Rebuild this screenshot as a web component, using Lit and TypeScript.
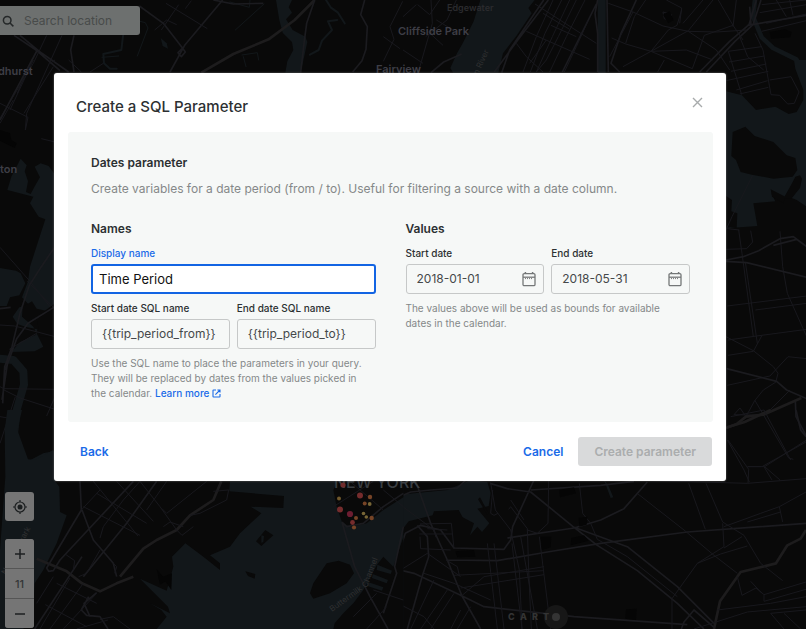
import { LitElement, html, svg, css } from "lit";
import { customElement, property } from "lit/decorators.js";

interface Trip {
  x: number;
  y: number;
  r: number;
  color: string;
}

const TRIPS: Trip[] = [
  { x: 343, y: 485, r: 2.6, color: "#702c2c" },
  { x: 339, y: 498.5, r: 2, color: "#71592c" },
  { x: 360, y: 495.5, r: 3, color: "#752c2d" },
  { x: 370, y: 497, r: 2.2, color: "#774426" },
  { x: 364.7, y: 503.5, r: 2, color: "#774426" },
  { x: 369.7, y: 504, r: 1.9, color: "#776536" },
  { x: 340, y: 509.5, r: 3, color: "#752c2d" },
  { x: 350, y: 514, r: 3.1, color: "#6c1d31" },
  { x: 363.5, y: 513.5, r: 1.8, color: "#776536" },
  { x: 366.3, y: 517, r: 1.8, color: "#776536" },
  { x: 356, y: 518, r: 2, color: "#774426" },
  { x: 371.7, y: 518, r: 2.2, color: "#774426" },
  { x: 352.5, y: 522.5, r: 2.4, color: "#752c2d" },
  { x: 354, y: 527.5, r: 2.1, color: "#774426" },
];

@customElement("city-map")
class CityMap extends LitElement {
  static styles = css`
    :host {
      display: block;
    }
    .canvas {
      display: block;
      width: 100%;
      height: 100%;
      background: #090909;
    }
    .water {
      fill: #12171a;
    }
    .stream {
      fill: none;
      stroke: #12171a;
      stroke-linecap: round;
      stroke-linejoin: round;
    }
    .s3 { stroke-width: 3; }
    .s6 { stroke-width: 6; }
    .s14 { stroke-width: 14; }
    .s24 { stroke-width: 24; }
    .land {
      fill: #090909;
    }
    .park {
      fill: #050505;
    }
    .street,
    .road,
    .highway {
      fill: none;
      stroke-linejoin: round;
    }
    .street {
      stroke: #18181d;
      stroke-width: 3;
    }
    .road {
      stroke: #1b1b1f;
      stroke-width: 5;
    }
    .highway {
      stroke: #1d1c1d;
      stroke-width: 8;
    }
    text {
      font-family: Inter, "Liberation Sans", sans-serif;
    }
    .town {
      font-size: 11px;
      font-weight: 600;
      fill: #3e3e46;
    }
    .minor {
      font-size: 9px;
      font-weight: 600;
      fill: #2b2b2e;
    }
    .city {
      font-size: 16px;
      font-weight: 500;
      fill: #3a3e42;
    }
    .river {
      font-size: 8px;
      fill: #2f3031;
    }
    .brand {
      font-size: 9px;
      font-weight: 800;
      fill: #343434;
    }
    .halo {
      fill: #171717;
    }
    .core {
      fill: #343434;
    }
  `;

  private northWest() {
    return svg`<g transform="scale(0.33333)">
      <path class="water" d="M828 0H876L866 22 876 38 858 58 878 90 916 110 922 126 902 218H856L862 184 880 150 876 126 848 98 838 60Z"/>
      <path class="water" d="M482 114L500 130 504 146 488 138Z"/>
      <path class="stream s6" d="M978 0L992 22 1014 38 1034 70M1012 60L984 64 996 90 966 122 956 150 930 164"/>
      <path class="stream s6" d="M370 100L364 150 310 162 312 190 330 206H350"/>
      <path class="stream s3" d="M412 168L444 84 436 68 412 62M306 172L356 168M750 0L748 22 690 6M726 165L772 158 776 180M730 170L738 200M792 12L706 90"/>
      <path class="road" d="M42 106L108 150 180 212M60 106L118 154 206 216M222 106L212 150 222 216"/>
      <path class="highway" d="M944 0L884 60 806 118 700 162 604 218"/>
      <path class="road" d="M944 0L920 70 912 130 902 218M668 0L554 136 510 216M418 18L490 70 540 134 556 156 544 170 534 158 552 140M640 0L700 12 790 10M1094 0L1082 44 1102 80 1098 148 1086 182 1058 216"/>
      <path class="street" d="M140 106L100 190 0 355M186 106L80 340 76 390M160 200L72 340M0 310L84 352 76 390M498 10L622 86M536 14L484 90M464 90L500 60 530 74M574 2L556 26M1208 4L1170 80 1182 118 1150 184M1150 110L1200 146M112 150L76 220 52 280M206 180L244 216M310 190L270 216"/>
      <path class="road" d="M112 150L34 296 0 360"/>
    </g>`;
  }

  private northEast() {
    return svg`<g transform="translate(403 0) scale(0.33333)">
      <path class="water" d="M232 0H395L376 24 386 40 340 108 300 160 286 218H150L142 204 162 160 180 128 212 64Z"/>
      <path class="stream s24" d="M596 0V218"/>
      <path class="stream s14" d="M1056 0L1050 50 1076 112 1110 144 1180 178 1212 236"/>
      <path class="road" d="M436 0L340 126 274 216M422 0L320 150 296 218M584 0L576 40 584 100V216M612 0L616 216M580 12L478 216M700 0L654 100 624 190 650 216M1060 0L1038 74 980 124 890 216M1074 0L1050 74 996 124 910 216M1040 20L1044 72M176 162L122 186 84 218"/>
      <path class="street" d="M0 50L40 14M84 0L88 70 46 216M0 150L60 190M70 90L120 136M44 14L80 44 110 0M160 0L132 60 68 110M100 60L150 90M396 12L580 130M370 94L560 178M340 130L370 170 420 216M450 0L400 110 360 216M476 0L426 100 382 216M500 0L448 110 400 216M520 0L466 110 430 180 400 216M546 0L490 110 440 216M556 60L520 140 484 216M420 40L500 88M444 76L520 110M430 120L380 190"/>
      <path class="street" d="M616 10L690 36 780 78 856 94 940 96 1030 90M728 0L694 50 668 130M626 114L668 132 744 154 868 206M690 36L620 170M744 154L856 92 930 0M660 200L744 154 850 150 930 180M780 36L806 44 802 62 784 56 780 36M836 30L822 76 796 90 744 154M790 0L836 24 830 70M900 0L840 70M868 206L904 106 990 76M856 94L940 150 980 210M946 0L990 76 1020 120M1000 0L990 80M784 180L764 216"/>
      <path class="street" d="M1160 0L1170 46M1076 14L1130 8 1210 0M1070 38L1210 14M1076 94L1210 62M1090 70L1210 42M1120 0L1150 50M1010 110L1034 170 1082 210M976 154L1076 140M978 186L1084 168M984 214L1090 192M970 242L1096 214M1000 270L1094 242M1010 282L1096 262M976 154L1016 284M1056 100L1080 150 1104 284 1130 286 1154 312 1174 310 1188 276 1164 230 1100 240"/>
      <path class="road" d="M1034 76L1210 46"/>
      <path class="park" d="M1100 96L1146 88 1166 96 1162 112 1104 116ZM780 44L800 34 812 60 796 70Z"/>
    </g>`;
  }

  private west() {
    return svg`<g transform="translate(0 60) scale(0.33333)">
      <path class="water" d="M62 296L80 316 74 334 84 364 78 396 92 402 106 376 120 352 104 320 122 310 146 318 165 344V730L110 770 84 786 100 800 130 860 104 874 34 876 60 846 108 824 112 808 76 800 52 792 38 770 58 742 88 736 66 712 84 664 90 620 136 478 116 470 90 430 100 410 22 390 34 350Z"/>
      <path class="water" d="M0 624L48 632 62 640 76 670 58 706 30 712 20 738 0 738Z"/>
      <path class="stream s24" d="M0 896L40 900 70 934 72 974 50 1050 38 1160 30 1280"/>
      <path class="water" d="M52 1142L84 1204 130 1180 165 1172V1290H20L26 1160Z"/>
      <path class="land" d="M68 740L96 724 110 746 138 752 110 770 84 786 66 770ZM165 744L110 776 120 830 165 830Z"/>
      <path class="road" d="M165 560L124 620 88 676 60 760 36 860 14 920 8 1030M165 740L84 790 50 836 16 930M0 746L32 742M24 900L6 1020"/>
      <path class="street" d="M0 562L90 664 150 740M82 664L165 746M0 795L44 798 165 830M0 980L12 986 165 988M12 990L60 1014 165 1048M46 1010L0 1150M28 868L110 820M165 1010L140 1068M124 236L165 246M0 1070L24 1074M0 190L40 120M100 0L30 150M150 10L165 0"/>
      <path class="park" d="M0 210L30 220 34 240 50 250 44 264 0 242Z"/>
    </g>`;
  }

  private east() {
    return svg`<g transform="translate(720 60) scale(0.33333)">
      <path class="water" d="M18 94L66 106 108 150 166 140 206 162 230 156 250 120 250 90 226 26 222 0H260V440L230 420 206 410 180 414 154 400 166 424 100 430 112 498 30 504 18 500Z"/>
      <path class="land" d="M38 216L76 200 104 228 160 246 200 286 226 294 232 330 218 350 160 356 96 344 62 336 48 300 34 288ZM240 346L246 356 240 384 214 416 190 416 216 370 226 350ZM152 388L196 410 190 430 156 410ZM18 408L36 420 34 454 52 460 50 504 18 500Z"/>
      <path class="street" d="M98 346L36 470 18 510M56 510L66 580 100 830M76 606L112 850M22 506L58 510M92 512L98 546 80 566 18 568M180 514L188 620 202 700 260 830M22 738L260 708M106 750L260 730M24 840L110 828 260 808M24 886L100 874 126 826M18 830L100 872 160 920 174 940 168 964M22 976L150 948 204 890 260 896M210 990L150 1050 130 1066 42 1064 60 1044 78 1070 104 1022 130 990 168 966M104 1020L130 1064 206 1194 220 1198M24 1140L86 1228 84 1270M84 1220H134L260 1140M134 1220L180 1260"/>
      <path class="road" d="M18 604L80 608 260 652M20 926L170 964 200 990 260 1016M18 600L70 590 116 572 180 536 220 530 260 560M160 556L230 538 260 560M226 1024L228 1070 260 1130"/>
      <path class="highway" d="M18 1104L50 1092 78 1070 130 1064 244 1014"/>
    </g>`;
  }

  private southEast() {
    return svg`<g transform="translate(394 410) scale(0.33333)">
      <path class="water" d="M0 270L20 254 60 250 160 240 230 210 280 216 290 250 284 288 250 296 286 340 264 366 250 350 228 376 240 340 206 322 194 300 120 304 116 316 44 334 24 360 20 394 0 420ZM630 210L642 224 658 262 650 264Z"/>
      <path class="land" d="M258 262L284 310 280 314 252 268Z"/>
      <path class="road" d="M0 268L50 246 110 240 190 234 216 210M64 210L110 340 160 450 204 558 260 657M10 480L14 430 34 370 80 346 140 360 180 414 330 418 350 390 356 350 420 210M288 220L340 236 410 246 540 352 610 406 730 482 850 580 930 657M540 352L700 410 850 530 960 640M160 450L310 452 460 426 620 400 880 366 1236 340M340 384L540 354 620 330 690 296 760 216M0 476L60 490 200 556 270 590 540 620 880 644"/>
      <path class="highway" d="M1236 360L1220 386 1180 406 1146 460 1040 486 978 574 960 657M1000 52L1052 36 1130 0"/>
      <path class="road" d="M862 657L870 636 900 600 960 652M70 346L100 380 104 440 86 494 40 657M410 240L620 226 720 214M1206 0L1220 60 1236 80"/>
      <path class="street" d="M0 270L120 360 126 382M78 380L80 416 170 420M78 342L172 340 180 416M100 356L160 360M76 372H176M290 218L304 300 350 360 376 480 384 657M296 240L290 310 300 316 312 310M344 298L350 290 400 356 404 480 412 657M350 270L390 330M464 210L462 340 430 370 400 360M300 400L330 657M354 400L384 657M280 400L310 657M380 380L430 657M436 380L470 657M556 220L566 310 590 340 610 388 700 440 850 560M732 252L870 360 960 436 1030 490M884 220L934 358M936 220L986 336 1050 376 1100 460 1166 512M720 210L1060 220 1236 206M1000 90L1050 180 1066 216M1060 170L1104 170 1236 96M1110 170L1134 210M1010 20L1110 0 1190 150M990 350L1100 310 1156 290 1236 246M1156 290L1166 336M1060 336L1160 306M986 340L990 410 910 460 834 566V657M1044 380L990 414M1060 408L980 432 910 460M1030 500L1044 556 1086 534 1110 554 1236 516M1110 554V574L1236 538M1104 550L1070 514M180 496L450 482M200 534L450 494M156 450L190 470 196 496M200 560L270 500 450 470M0 574L90 620 120 657M50 657L120 510M80 657L160 540M110 657L180 550M170 657L200 600M190 657L230 590M20 480L100 430 200 500M90 490L180 520 290 570M1236 590L1060 606 900 657M1236 600L1130 610 1170 657M1170 610L1220 657M1236 560L1130 580 970 600"/>
      <path class="park" d="M440 380L472 380 470 412 444 420ZM554 324L580 320 578 344 556 350ZM532 384L570 376 584 392 530 406ZM696 598L728 596 726 630 694 626ZM496 240L540 232 546 250 498 262ZM184 424L240 420 244 440 190 442Z"/>
    </g>`;
  }

  private southWest() {
    return svg`<g transform="translate(0 410) scale(0.33333)">
      <path class="water" d="M22 0L66 0 52 60 84 148 104 150 160 120 164 212 178 230 180 306 200 316 170 400 130 480 104 520 100 590 70 657H0V420L16 200 14 60Z"/>
      <path class="water" d="M690 214H1210V657H470L500 620 484 600 450 580 510 610 504 590 420 506 500 542 520 470 516 440 556 400 610 440 660 480 660 460 630 436 690 410 720 370 784 310 752 290 850 294 852 258 688 244Z"/>
      <path class="land" d="M768 394L796 360 820 376 784 408ZM736 484L766 492 764 506 744 498ZM930 550L940 520 980 460 1016 452 1050 464 1062 490 1040 520 990 550 940 566ZM1012 214H1210V262L1150 300 1100 340 1050 352 1026 336 1010 290 1000 240ZM1090 540L1130 466 1150 440 1180 470 1210 380V657H1000L1004 640 1030 610 1060 580Z"/>
      <path class="water" d="M784 376L792 378 790 396 784 398ZM1132 464L1176 482 1172 492 1130 480ZM1118 492L1164 510 1160 520 1116 504ZM1104 516L1150 532 1146 542 1102 528Z"/>
      <path class="highway" d="M110 446L200 484 246 520 300 544 350 520 400 500M360 500L430 416 470 390 530 360 570 316 640 270 664 214"/>
      <path class="road" d="M240 214L244 300 140 474 146 484 160 482 180 450 400 214M246 440L104 657M350 500L340 460 280 390 246 300M250 500L380 340 470 214M1026 336L1064 470 1110 560 1164 657M1026 336L1040 350 1090 340 1150 290 1210 250M1210 350L1184 470 1190 490 1150 610M266 560L244 600 260 616 300 620 324 657M270 620L252 580 290 548"/>
      <path class="street" d="M250 290L420 376M290 250L440 340M280 214L414 378M350 214L460 334M244 300L300 240M300 384L310 350 370 270 420 214M420 214L480 290 530 360M440 300L500 214M486 296L500 310 620 214M570 316L600 310 680 270 686 240 640 244M530 360L546 376 580 350M490 350L510 336 550 350M198 434L224 452 220 480M170 520L290 580M136 584L260 650M160 500L110 580M340 460L350 470 344 490M210 504L120 657M250 520L150 657M290 550L190 657M324 630L230 657M390 657L340 620 300 628M236 500L260 490 300 420M1060 620L1130 550M1100 657L1160 590M1120 540L1210 570M1150 240L1210 290M1000 290L1120 214M1050 214L1150 300"/>
      <path class="park" d="M470 478L490 500 516 490 514 540 496 514 480 524Z"/>
    </g>`;
  }

  render() {
    return html`
      <svg class="canvas" viewBox="0 0 806 629" preserveAspectRatio="xMidYMid slice" aria-hidden="true">
        ${this.northWest()} ${this.northEast()} ${this.west()} ${this.east()}
        ${this.southEast()} ${this.southWest()}
        <text class="city" x="334" y="488">NEW YORK</text>
        ${TRIPS.map((t) => svg`<circle cx=${t.x} cy=${t.y} r=${t.r} fill=${t.color} />`)}
        <text class="minor" x="447" y="11">Edgewater</text>
        <text class="town" x="398" y="35">Cliffside Park</text>
        <text class="town" x="376" y="73">Fairview</text>
        <text class="town" x="-2" y="75">dhurst</text>
        <text class="town" x="0" y="173">ton</text>
        <text class="river" transform="translate(478 75) rotate(-65)">n River</text>
        <text class="river" transform="translate(6 575) rotate(-62)">North Newark</text>
        <text class="river" transform="translate(332 612) rotate(-36)">Buttermilk</text>
        <text class="river" transform="translate(367 588) rotate(-70)">Channel</text>
        <circle class="halo" cx="556" cy="617" r="12" />
        <circle class="core" cx="556" cy="617" r="4" />
        <text class="brand" x="508 520 532 543" y="620">CART</text>
      </svg>
    `;
  }
}

@customElement("form-field")
class FormField extends LitElement {
  @property() label = "";
  @property() value = "";
  @property({ type: Boolean, reflect: true }) active = false;
  @property({ type: Boolean }) calendar = false;

  static styles = css`
    :host {
      display: block;
      min-width: 0;
      font-family: Inter, "Liberation Sans", sans-serif;
    }
    .label {
      display: block;
      margin-bottom: 4px;
      font-size: 10px;
      line-height: 14px;
      font-weight: 500;
      color: #2c3032;
    }
    .box {
      display: flex;
      align-items: center;
      box-sizing: border-box;
      height: 30px;
      padding: 0 6px 0 10px;
      border: 1px solid #c6c8c8;
      border-radius: 3px;
    }
    .input {
      flex: 1;
      min-width: 0;
      padding: 0;
      border: 0;
      outline: 0;
      background: none;
      font-family: inherit;
      font-size: 12px;
      line-height: 18px;
      color: #45484a;
    }
    .pick {
      display: flex;
      padding: 0;
      border: 0;
      background: none;
      color: #747778;
    }
    :host([active]) .label {
      color: #1a6be8;
    }
    :host([active]) .box {
      padding: 0 6px;
      border: 2px solid #1264e3;
      background: #fff;
    }
    :host([active]) .input {
      font-size: 13px;
      color: #111;
    }
  `;

  render() {
    return html`
      <label class="label" for="field">${this.label}</label>
      <div class="box">
        <input class="input" id="field" type="text" .value=${this.value} />
        ${this.calendar
          ? html`<button class="pick" type="button" aria-label="Open calendar">
              <svg width="16" height="16" viewBox="0 0 16 16" fill="none" stroke="currentColor">
                <rect x="2" y="2.6" width="12" height="12" rx="1.2" stroke-width="1.3" />
                <path d="M2 6.2H14" stroke-width="1.3" />
                <path d="M4.4 1V3M11.6 1V3" stroke-width="1.5" />
                <path d="M4 7.6H12" stroke-width="1" stroke-dasharray="1 1" />
              </svg>
            </button>`
          : null}
      </div>
    `;
  }
}

@customElement("app-root")
class AppRoot extends LitElement {
  static styles = css`
    :host {
      display: block;
      position: relative;
      box-sizing: border-box;
      min-height: 100vh;
      padding: 73px 80px 148px 54px;
      overflow: hidden;
      background: #090909;
      font-family: Inter, "Liberation Sans", sans-serif;
      font-size: 12px;
      line-height: 18px;
    }
    .map {
      position: absolute;
      inset: 0;
    }
    .search {
      position: absolute;
      top: 6px;
      left: 0;
      display: flex;
      align-items: center;
      gap: 8px;
      box-sizing: border-box;
      width: 140px;
      height: 29px;
      padding: 0 8px 0 2px;
      border-radius: 0 3px 3px 0;
      background: #6d706f;
      color: #252829;
    }
    .query {
      flex: 1;
      min-width: 0;
      padding: 0;
      border: 0;
      outline: 0;
      background: none;
      font: inherit;
      color: #252829;
    }
    .query::placeholder {
      color: #484b4a;
      opacity: 1;
    }
    .controls {
      position: absolute;
      left: 5px;
      bottom: 1px;
      display: flex;
      flex-direction: column;
      gap: 18px;
      width: 29px;
    }
    .stack {
      display: flex;
      flex-direction: column;
      gap: 1px;
      border-radius: 3px;
      overflow: hidden;
      background: #555;
    }
    .cell {
      display: flex;
      align-items: center;
      justify-content: center;
      height: 29px;
      padding: 0;
      border: 0;
      background: #757575;
      color: #1c1f20;
      font-family: inherit;
      font-size: 11px;
      line-height: 18px;
    }
    .level {
      font-weight: 500;
      color: #343637;
    }
    .dialog {
      position: relative;
      border-radius: 3px;
      background: #fff;
      box-shadow: 0 0 2px #777;
    }
    .head {
      display: flex;
      justify-content: space-between;
      align-items: flex-start;
      box-sizing: border-box;
      height: 59px;
      padding: 21px 21px 0 22px;
    }
    .title {
      margin: 3px 0 0;
      font-size: 15px;
      line-height: 20px;
      font-weight: 500;
      color: #2c3032;
    }
    .close {
      display: flex;
      padding: 0;
      border: 0;
      background: none;
      color: #a8abac;
    }
    .panel {
      margin: 0 13px 0 14px;
      padding: 22px 23px 21px;
      border-radius: 3px;
      background: #f6f8f7;
    }
    .heading {
      margin: 0 0 8px;
      font-size: 12px;
      line-height: 18px;
      font-weight: 600;
      color: #2c3032;
    }
    .intro {
      margin: 0 0 22px;
      color: #858889;
    }
    .columns {
      display: grid;
      grid-template-columns: 1fr 1fr;
      gap: 30px;
    }
    .group {
      display: flex;
      flex-direction: column;
      gap: 7px;
      min-width: 0;
    }
    .group > .heading {
      margin-bottom: 1px;
    }
    .pair {
      display: grid;
      grid-template-columns: 1fr 1fr;
      gap: 7px;
    }
    .hint {
      margin: 0;
      font-size: 10px;
      line-height: 15px;
      color: #858889;
    }
    .link {
      font-weight: 500;
      color: #1a6be8;
      text-decoration: none;
    }
    .external {
      vertical-align: -1px;
    }
    .foot {
      display: flex;
      align-items: center;
      gap: 3px;
      padding: 15px 14px;
    }
    .button {
      height: 29px;
      padding: 0 12px;
      border: 0;
      border-radius: 3px;
      background: none;
      font-family: inherit;
      font-size: 12px;
      line-height: 18px;
      font-weight: 600;
      color: #1a6be8;
    }
    .back {
      margin-right: auto;
    }
    .submit {
      padding: 0 16px;
      background: #d9dadb;
      color: #abadae;
    }
  `;

  render() {
    return html`
      <city-map class="map"></city-map>

      <div class="search">
        <svg width="14" height="14" viewBox="0 0 14 14" fill="none" stroke="currentColor" stroke-width="1.5">
          <circle cx="5.2" cy="6.2" r="3.8" />
          <path d="M8 9L11.4 12.4" />
        </svg>
        <input class="query" type="text" placeholder="Search location" aria-label="Search location" />
      </div>

      <div class="controls">
        <div class="stack">
          <button class="cell" type="button" aria-label="Center map">
            <svg width="16" height="16" viewBox="0 0 16 16" fill="none" stroke="currentColor" stroke-width="1.2">
              <circle cx="8" cy="8" r="5" />
              <circle cx="8" cy="8" r="2.5" fill="currentColor" stroke="none" />
              <path d="M8 1V3M8 13V15M1 8H3M13 8H15" />
            </svg>
          </button>
        </div>
        <div class="stack">
          <button class="cell" type="button" aria-label="Zoom in">
            <svg width="12" height="12" viewBox="0 0 12 12" fill="none" stroke="currentColor" stroke-width="1.5">
              <path d="M6 1V11M1 6H11" />
            </svg>
          </button>
          <span class="cell level">11</span>
          <button class="cell" type="button" aria-label="Zoom out">
            <svg width="12" height="12" viewBox="0 0 12 12" fill="none" stroke="currentColor" stroke-width="1.5">
              <path d="M1 6H11" />
            </svg>
          </button>
        </div>
      </div>

      <section class="dialog" role="dialog" aria-labelledby="title">
        <header class="head">
          <h1 class="title" id="title">Create a SQL Parameter</h1>
          <button class="close" type="button" aria-label="Close">
            <svg width="16" height="16" viewBox="0 0 16 16" fill="none" stroke="currentColor" stroke-width="1.4">
              <path d="M4 4L13 13M13 4L4 13" />
            </svg>
          </button>
        </header>

        <div class="panel">
          <h2 class="heading">Dates parameter</h2>
          <p class="intro">
            Create variables for a date period (from / to). Useful for filtering a source with a date column.
          </p>
          <div class="columns">
            <div class="group">
              <h3 class="heading">Names</h3>
              <form-field active label="Display name" value="Time Period"></form-field>
              <div class="pair">
                <form-field label="Start date SQL name" value="{{trip_period_from}}"></form-field>
                <form-field label="End date SQL name" value="{{trip_period_to}}"></form-field>
              </div>
              <p class="hint">
                Use the SQL name to place the parameters in your query.<br />
                They will be replaced by dates from the values picked in<br />
                the calendar.
                <a class="link" href="#learn-more">Learn more
                  <svg class="external" width="9" height="9" viewBox="0 0 9 9" fill="none" stroke="currentColor" stroke-width="1.1">
                    <path d="M4 1H1.6Q1 1 1 1.6V7.4Q1 8 1.6 8H7.4Q8 8 8 7.4V5M5.4 1H8V3.6M8 1L3.4 5.6" />
                  </svg></a>
              </p>
            </div>
            <div class="group">
              <h3 class="heading">Values</h3>
              <div class="pair">
                <form-field calendar label="Start date" value="2018-01-01"></form-field>
                <form-field calendar label="End date" value="2018-05-31"></form-field>
              </div>
              <p class="hint">
                The values above will be used as bounds for available<br />
                dates in the calendar.
              </p>
            </div>
          </div>
        </div>

        <footer class="foot">
          <button class="button back" type="button">Back</button>
          <button class="button" type="button">Cancel</button>
          <button class="button submit" type="button" disabled>Create parameter</button>
        </footer>
      </section>
    `;
  }
}
